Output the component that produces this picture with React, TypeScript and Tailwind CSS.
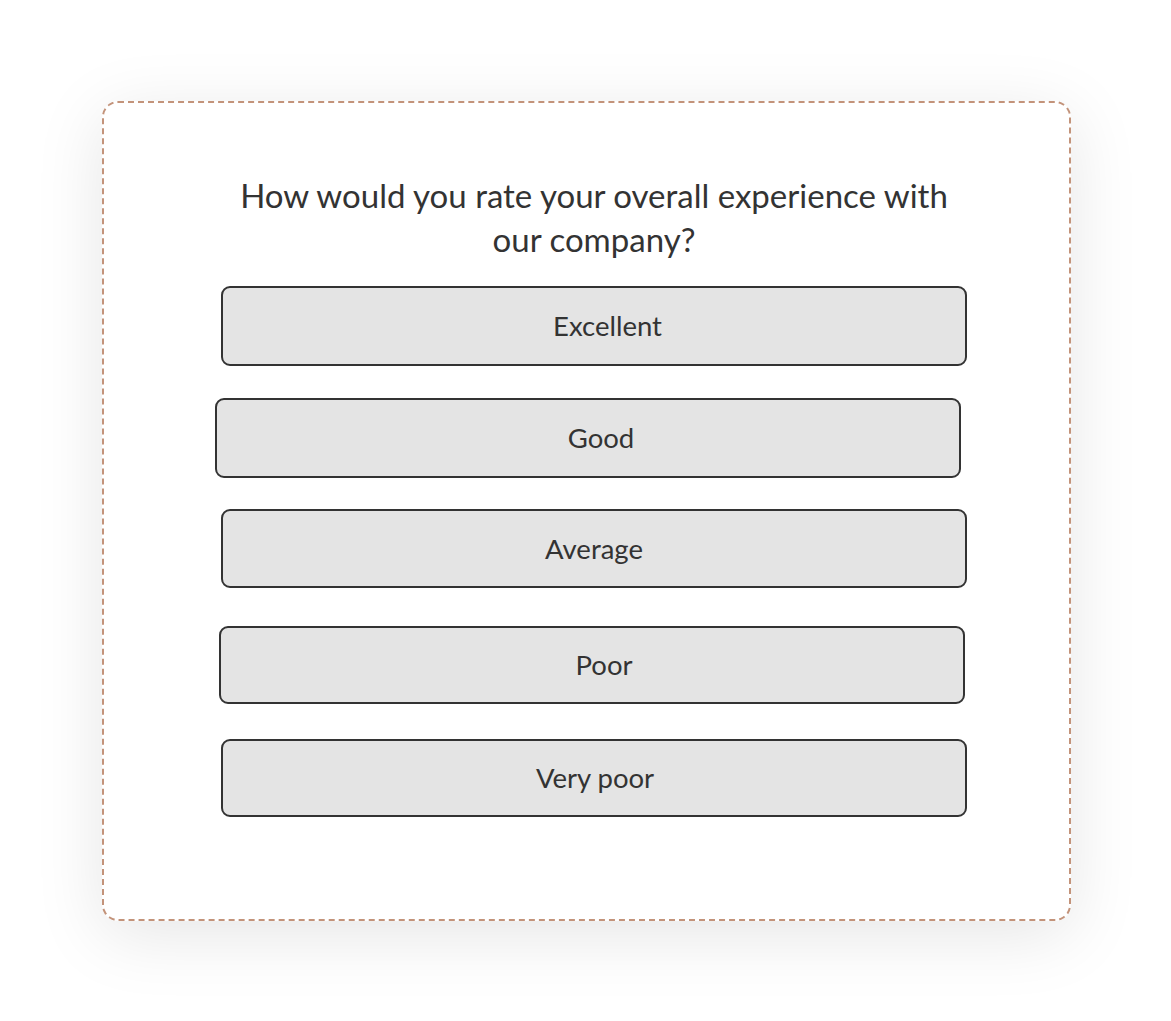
const options = [
  { label: 'Excellent', shift: 'ml-0', text: 'pl-[27px]', box: 'h-[80px]', gap: 'mt-0' },
  { label: 'Good', shift: '-ml-[6px]', text: 'pl-[26px]', box: 'h-[80px]', gap: 'mt-[32px]' },
  { label: 'Average', shift: 'ml-0', text: 'pl-0', box: 'h-[79px]', gap: 'mt-[31px]' },
  { label: 'Poor', shift: '-ml-[2px]', text: 'pl-[24px]', box: 'h-[78px]', gap: 'mt-[38px]' },
  { label: 'Very poor', shift: 'ml-0', text: 'pl-[2px]', box: 'h-[78px]', gap: 'mt-[35px]' },
]

export default function App() {
  return (
    <div
      className="min-h-[1021px] bg-white pt-[101px] pl-[102px]"
      style={{ fontFamily: 'Lato, "Noto Sans", sans-serif' }}
    >
      <div className="w-[969px] h-[820px] rounded-[16px] border-2 border-dashed border-[#c3937a] bg-white shadow-[0_14px_70px_rgba(0,0,0,0.1)] pl-[117px] pt-[70px]">
        <h1 className="w-[746px] text-center text-[33px] leading-[44px] text-[#333333] font-normal">
          How would you rate your overall experience with
          <br />
          our company?
        </h1>

        <div className="mt-[25px] flex flex-col">
          {options.map(o => (
            <button
              key={o.label}
              className={`w-[746px] ${o.box} ${o.shift} ${o.gap} ${o.text} flex items-center justify-center rounded-[9px] border-2 border-[#333333] bg-[#e4e4e4] text-[27.5px] text-[#333333]`}
            >
              {o.label}
            </button>
          ))}
        </div>
      </div>
    </div>
  )
}
